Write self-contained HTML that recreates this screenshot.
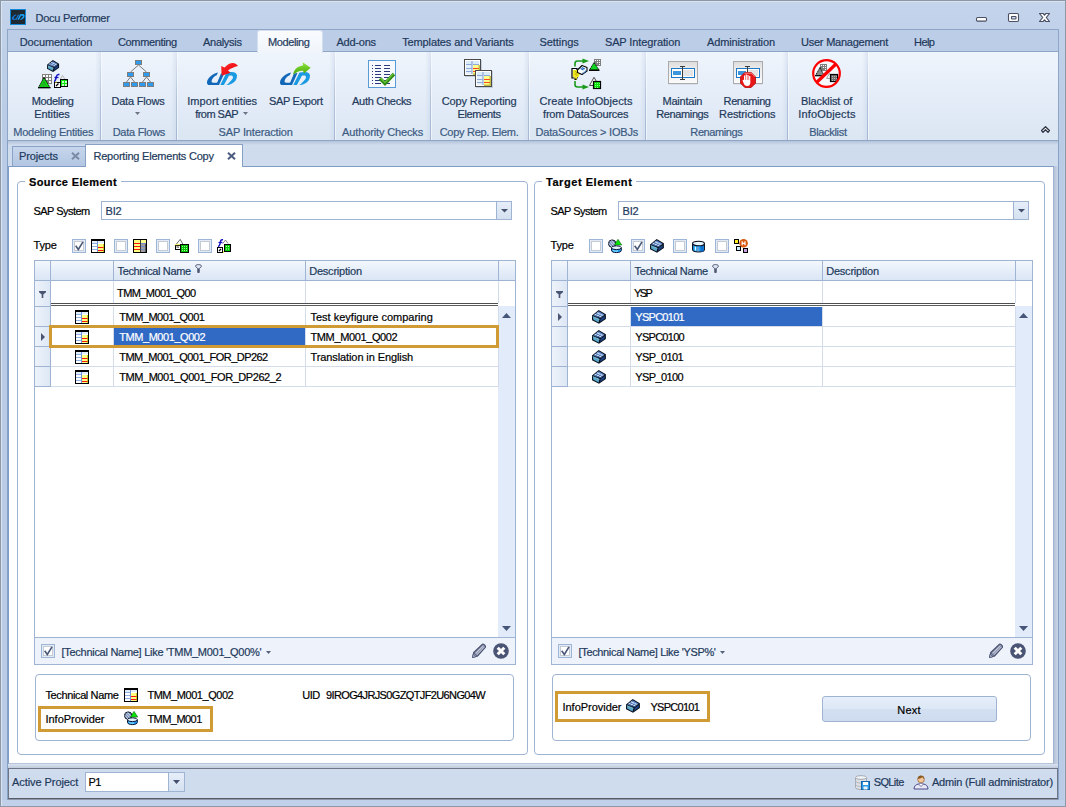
<!DOCTYPE html><html><head><meta charset="utf-8"><title>Docu Performer</title><style>
*{box-sizing:border-box;margin:0;padding:0}
html,body{width:1066px;height:807px;overflow:hidden}
body{font:11px "Liberation Sans",sans-serif;color:#1e395b;background:#c2d3ea;position:relative}
.a{position:absolute}
.t{position:absolute;white-space:nowrap;line-height:13px;height:13px;z-index:3;-webkit-text-stroke:.2px currentColor}
.c{text-align:center}
.k{color:#000}
svg{position:absolute;overflow:visible;z-index:3}
.cb{position:absolute;width:14px;height:14px;border:1px solid #9db5d6;background:#fff;box-shadow:inset 0 0 0 1px #e2eaf6,inset 0 0 0 2px #c6cad2}
.hdr{position:absolute;background:linear-gradient(#f4f8fd,#e3ecf8 60%,#dbe6f5);border-right:1px solid #9fb4d3;border-bottom:1px solid #9fb4d3}
.ind{position:absolute;background:linear-gradient(90deg,#eef3fa,#dde7f5);border-right:1px solid #9fb4d3;border-bottom:1px solid #9fb4d3}
.cell{position:absolute;border-right:1px solid #d3dcea;border-bottom:1px solid #d3dcea;background:#fff}
.combo{position:absolute;border:1px solid #9fb4d3;background:#fff}
.cbtn{position:absolute;background:linear-gradient(#e6eef9,#d5e1f1);border:1px solid #9fb4d3}
.gold{position:absolute;border:3px solid #d09b35}
</style></head><body>
<div class="a" style="left:0px;top:0px;width:1066px;height:807px;border:1px solid #8d97a6;background:linear-gradient(#c4d4eb,#c0d1e9 30px,#c0d1e9);box-shadow:inset 1px 1px 0 #d9e4f2"></div>
<div class="a" style="left:2px;top:30px;width:5px;height:770px;background:linear-gradient(#c0d1e9,#b9cbe5 110px)"></div>
<div class="a" style="left:1059px;top:30px;width:5px;height:770px;background:linear-gradient(#c0d1e9,#b9cbe5 110px)"></div>
<div class="a" style="left:7px;top:29px;width:1px;height:771px;background:#86a0c6"></div>
<div class="a" style="left:1058px;top:29px;width:1px;height:771px;background:#86a0c6"></div>
<div class="a" style="left:7px;top:799px;width:1052px;height:1px;background:#8fa5c6"></div>
<svg class="a" style="left:10px;top:9px" width="16" height="16" viewBox="0 0 16 16"><rect width="16" height="16" fill="#1088dc"/><rect x="1" y="1" width="14" height="14" fill="#1f2932"/><g transform="translate(1.700,5.100) scale(.43)"><path d="M11 .5C6 1.500 .8 5.500 0 9.900-.3 12 .8 13 2.500 13H12L17.500 1 14 1.500 10.200 10.500C9.500 10.800 9 10.800 8.300 10.800H6.500C4.800 10.800 4.300 10 4.700 8.600 5.500 6 7.500 4 9.700 3.200z" fill="#1478d8"/><path d="M19.500 .5 24.500 0C28 0 30 1.500 30 3.600 30 5 29.600 6.500 29 7.700 28 9.500 26.500 10.800 24.500 11.700 23 12.500 21.500 13 19.100 13 20.500 12.300 21.500 11.500 22.300 10.400 24 8.500 25.500 7 25.900 5.900 26.200 4.500 25.500 3.800 24.500 3.600 23.500 3.500 22.500 3.600 21.800 4L16.900 13H13.300z" fill="#18a0f4"/></g></svg>
<div class="t" style="left:35.5px;top:12px;letter-spacing:-.25px;">Docu Performer</div>
<svg class="a" style="left:975px;top:12px" width="78" height="12" viewBox="0 0 78 12"><g fill="#fff" stroke="#4b4f63" stroke-width="1.1"><rect x="1.500" y="5.500" width="10" height="3.600" rx="1.200"/><rect x="33.500" y="1.500" width="10" height="8" rx="1.200"/><rect x="36.500" y="4.500" width="4.500" height="2.500" rx=".4" fill="#c9d7ec"/><path d="M64.500 1.500h3.600l1.400 1.700 1.400-1.700h3.600l-3.200 4 3.200 4h-3.600l-1.400-1.700-1.400 1.700h-3.600l3.200-4z" stroke-linejoin="round" stroke-width="1.200"/></g></svg>
<div class="a" style="left:7px;top:29px;width:1052px;height:23px;background:#bccde7;border:1px solid #8fa5c6;border-bottom:1px solid #8fa5c6"></div>
<div class="a" style="left:7px;top:52px;width:1052px;height:89px;background:linear-gradient(#eff5fc,#e6eef9 40%,#dbe6f3);border-left:1px solid #8fa5c6;border-right:1px solid #8fa5c6;border-bottom:1px solid #8fa5c6"></div>
<div class="a" style="left:257px;top:30px;width:66px;height:23px;background:linear-gradient(#f9fbfe,#f0f5fb);border:1px solid #d3deee;border-bottom:none;border-radius:3px 3px 0 0"></div>
<div class="t" style="left:19.8px;top:36px;letter-spacing:-.12px;">Documentation</div>
<div class="t" style="left:118.0px;top:36px;letter-spacing:-.36px;">Commenting</div>
<div class="t" style="left:203.1px;top:36px;letter-spacing:-.31px;">Analysis</div>
<div class="t" style="left:268.0px;top:36px;letter-spacing:-.39px;">Modeling</div>
<div class="t" style="left:336.4px;top:36px;letter-spacing:-.21px;">Add-ons</div>
<div class="t" style="left:402.2px;top:36px;letter-spacing:-.12px;">Templates and Variants</div>
<div class="t" style="left:539.5px;top:36px;letter-spacing:-.06px;">Settings</div>
<div class="t" style="left:604.9px;top:36px;letter-spacing:-.10px;">SAP Integration</div>
<div class="t" style="left:707.0px;top:36px;letter-spacing:-.13px;">Administration</div>
<div class="t" style="left:801.0px;top:36px;letter-spacing:-.23px;">User Management</div>
<div class="t" style="left:914.1px;top:36px;letter-spacing:-.63px;">Help</div>
<div class="a" style="left:95px;top:52px;width:5px;height:88px;background:linear-gradient(90deg,rgba(190,205,228,0),rgba(190,205,228,.35))"></div>
<div class="a" style="left:100px;top:52px;width:1px;height:88px;background:linear-gradient(#dfe8f4,#b4c5dd 50%,#a3b7d3)"></div>
<div class="a" style="left:101px;top:52px;width:1px;height:88px;background:linear-gradient(#f6f9fd,#eef3fa)"></div>
<div class="a" style="left:171px;top:52px;width:5px;height:88px;background:linear-gradient(90deg,rgba(190,205,228,0),rgba(190,205,228,.35))"></div>
<div class="a" style="left:176px;top:52px;width:1px;height:88px;background:linear-gradient(#dfe8f4,#b4c5dd 50%,#a3b7d3)"></div>
<div class="a" style="left:177px;top:52px;width:1px;height:88px;background:linear-gradient(#f6f9fd,#eef3fa)"></div>
<div class="a" style="left:329px;top:52px;width:5px;height:88px;background:linear-gradient(90deg,rgba(190,205,228,0),rgba(190,205,228,.35))"></div>
<div class="a" style="left:334px;top:52px;width:1px;height:88px;background:linear-gradient(#dfe8f4,#b4c5dd 50%,#a3b7d3)"></div>
<div class="a" style="left:335px;top:52px;width:1px;height:88px;background:linear-gradient(#f6f9fd,#eef3fa)"></div>
<div class="a" style="left:425px;top:52px;width:5px;height:88px;background:linear-gradient(90deg,rgba(190,205,228,0),rgba(190,205,228,.35))"></div>
<div class="a" style="left:430px;top:52px;width:1px;height:88px;background:linear-gradient(#dfe8f4,#b4c5dd 50%,#a3b7d3)"></div>
<div class="a" style="left:431px;top:52px;width:1px;height:88px;background:linear-gradient(#f6f9fd,#eef3fa)"></div>
<div class="a" style="left:523px;top:52px;width:5px;height:88px;background:linear-gradient(90deg,rgba(190,205,228,0),rgba(190,205,228,.35))"></div>
<div class="a" style="left:528px;top:52px;width:1px;height:88px;background:linear-gradient(#dfe8f4,#b4c5dd 50%,#a3b7d3)"></div>
<div class="a" style="left:529px;top:52px;width:1px;height:88px;background:linear-gradient(#f6f9fd,#eef3fa)"></div>
<div class="a" style="left:640px;top:52px;width:5px;height:88px;background:linear-gradient(90deg,rgba(190,205,228,0),rgba(190,205,228,.35))"></div>
<div class="a" style="left:645px;top:52px;width:1px;height:88px;background:linear-gradient(#dfe8f4,#b4c5dd 50%,#a3b7d3)"></div>
<div class="a" style="left:646px;top:52px;width:1px;height:88px;background:linear-gradient(#f6f9fd,#eef3fa)"></div>
<div class="a" style="left:782px;top:52px;width:5px;height:88px;background:linear-gradient(90deg,rgba(190,205,228,0),rgba(190,205,228,.35))"></div>
<div class="a" style="left:787px;top:52px;width:1px;height:88px;background:linear-gradient(#dfe8f4,#b4c5dd 50%,#a3b7d3)"></div>
<div class="a" style="left:788px;top:52px;width:1px;height:88px;background:linear-gradient(#f6f9fd,#eef3fa)"></div>
<div class="a" style="left:862px;top:52px;width:5px;height:88px;background:linear-gradient(90deg,rgba(190,205,228,0),rgba(190,205,228,.35))"></div>
<div class="a" style="left:867px;top:52px;width:1px;height:88px;background:linear-gradient(#dfe8f4,#b4c5dd 50%,#a3b7d3)"></div>
<div class="a" style="left:868px;top:52px;width:1px;height:88px;background:linear-gradient(#f6f9fd,#eef3fa)"></div>
<div class="t c" style="left:-26.799999999999997px;width:160px;top:126px;letter-spacing:-.22px;color:#3b5a82">Modeling Entities</div>
<div class="t c" style="left:58.900000000000006px;width:160px;top:126px;letter-spacing:-.26px;color:#3b5a82">Data Flows</div>
<div class="t c" style="left:175.7px;width:160px;top:126px;letter-spacing:-.13px;color:#3b5a82">SAP Interaction</div>
<div class="t c" style="left:302.6px;width:160px;top:126px;letter-spacing:-.13px;color:#3b5a82">Authority Checks</div>
<div class="t c" style="left:399.1px;width:160px;top:126px;letter-spacing:-.29px;color:#3b5a82">Copy Rep. Elem.</div>
<div class="t c" style="left:506.79999999999995px;width:160px;top:126px;letter-spacing:-.18px;color:#3b5a82">DataSources &gt; IOBJs</div>
<div class="t c" style="left:636.4px;width:160px;top:126px;letter-spacing:-.40px;color:#3b5a82">Renamings</div>
<div class="t c" style="left:747.9px;width:160px;top:126px;letter-spacing:-.32px;color:#3b5a82">Blacklist</div>
<div class="t c" style="left:-27.4px;width:160px;top:95px;letter-spacing:-.36px;">Modeling</div>
<div class="t c" style="left:-28.0px;width:160px;top:108px;letter-spacing:-.07px;">Entities</div>
<div class="t c" style="left:58.0px;width:160px;top:95px;letter-spacing:-.18px;">Data Flows</div>
<div class="t c" style="left:142.2px;width:160px;top:95px;letter-spacing:.05px;">Import entities</div>
<div class="t c" style="left:136.6px;width:160px;top:108px;letter-spacing:-.53px;">from SAP</div>
<div class="t c" style="left:215.8px;width:160px;top:95px;letter-spacing:-.29px;">SAP Export</div>
<div class="t c" style="left:301.7px;width:160px;top:95px;letter-spacing:-.28px;">Auth Checks</div>
<div class="t c" style="left:399.1px;width:160px;top:95px;letter-spacing:-.12px;">Copy Reporting</div>
<div class="t c" style="left:399.1px;width:160px;top:108px;letter-spacing:-.31px;">Elements</div>
<div class="t c" style="left:506.0px;width:160px;top:95px;letter-spacing:.07px;">Create InfoObjects</div>
<div class="t c" style="left:505.70000000000005px;width:160px;top:108px;letter-spacing:-.21px;">from DataSources</div>
<div class="t c" style="left:602.4px;width:160px;top:95px;letter-spacing:-.23px;">Maintain</div>
<div class="t c" style="left:602.4px;width:160px;top:108px;letter-spacing:-.39px;">Renamings</div>
<div class="t c" style="left:667.1px;width:160px;top:95px;letter-spacing:-.39px;">Renaming</div>
<div class="t c" style="left:667.2px;width:160px;top:108px;letter-spacing:-.10px;">Restrictions</div>
<div class="t c" style="left:746.6px;width:160px;top:95px;letter-spacing:-.11px;">Blacklist of</div>
<div class="t c" style="left:746.9px;width:160px;top:108px;letter-spacing:.16px;">InfoObjects</div>
<svg class="a" style="left:135px;top:112px" width="5" height="3" viewBox="0 0 5 3"><path d="M0 0h5L2.5 3z" fill="#6b7385"/></svg>
<svg class="a" style="left:243px;top:112px" width="5" height="3" viewBox="0 0 5 3"><path d="M0 0h5L2.5 3z" fill="#6b7385"/></svg>
<svg class="a" style="left:1041px;top:126px" width="9" height="7" viewBox="0 0 9 7"><path d="M4.500 .7 8.400 4.500 7 6.300 4.500 3.800 2 6.300 .6 4.500z" fill="#fff" stroke="#2f3345" stroke-width="1.300" stroke-linejoin="round"/></svg>
<svg class="a" style="left:36px;top:58px" width="32" height="32" viewBox="0 0 32 32" ><g transform="translate(11,2) scale(.87)"><path d="M0 5.400 6.700 0 13.900 4.200V9L7 13.800 0 10.200z" fill="#0a1220"/><path d="M1.300 5.600 6.800 1.300 12.500 4.500 8 7.700z" fill="#5580c4"/><path d="M1.100 6.700 7.300 9.300 6.600 12.400 1.100 9.600z" fill="#58a6c8"/><path d="M8.700 9.100 12.800 6V8.400L8 12.100z" fill="#1d4282"/><path d="M2.800 4.300 9.500 7M4.800 2.700 11.300 5.700" stroke="#d4e4f8" stroke-width="1.100" fill="none"/><path d="M3.200 6.200 5.800 4M5.600 7.200 8.600 4.800M8 8 11 5.700" stroke="#3a5c9c" stroke-width=".8" fill="none"/><path d="M.8 6.600 7.400 9.300" stroke="#8fd0e4" stroke-width=".8"/></g><rect x="6" y="16" width="10" height="10" fill="#808080"/><path d="M7 17h2v2H7zM10 17h2v2h-2zM13 17h2v2h-2zM10 20h2v2h-2zM13 20h2v2h-2zM13 23h2v2h-2z" fill="#fff"/><path d="M8 19.500 2.500 29.500h11.500z" fill="#0ce40c" stroke="#000" stroke-width="1" stroke-dasharray="1.500 .7"/><path d="M8 21v8M5 29l3-5 3 5" stroke="#2a9a2a" stroke-width="1" fill="none"/><path d="M2 29.700h12.500" stroke="#000" stroke-width="1.300"/><path d="M23.500 16.500c-2.500-.5-3 1-3.500 3.500s-.6 3.500-2 3.500" fill="none" stroke="#1414c4" stroke-width="1.600"/><path d="M18.500 19.500h4" stroke="#1414c4" stroke-width="1.300"/><path d="M24.500 21l2-3.700 2.200 3.700" fill="none" stroke="#b8b8b8" stroke-width="1"/><rect x="18.500" y="24.500" width="6" height="5" fill="#fff" stroke="#000"/><path d="M20 28l2.500-2.500" stroke="#000" stroke-width="1.200"/><path d="M19 24h2" stroke="#f0e040"/><rect x="24.500" y="21.500" width="7" height="7" fill="#0ce40c" stroke="#000"/><path d="M26 23h2v2h-2zM29 23h2v2h-2zM26 26h2v2h-2zM29 26h2v2h-2z" fill="#c4ffc4"/></svg>
<svg class="a" style="left:122px;top:58px" width="33" height="32" viewBox="0 0 33 32" ><path d="M16.500 7 8.500 14M16.500 7l8 7M8.500 19l-4 5M8.500 19l4 5M24.500 19l-4 5M24.500 19l4 5" stroke="#7a7a7a" stroke-width="1" fill="none"/><g fill="#2e9bef" stroke="#7d7d7d"><rect x="13.500" y="2.500" width="6" height="4"/><rect x="5.500" y="14.500" width="6" height="4"/><rect x="21.500" y="14.500" width="6" height="4"/><rect x="1.500" y="24.500" width="6" height="4"/><rect x="9.500" y="24.500" width="6" height="4"/><rect x="17.500" y="24.500" width="6" height="4"/><rect x="25.500" y="24.500" width="6" height="4"/></g></svg>
<svg class="a" style="left:206px;top:58px" width="32" height="32" viewBox="0 0 32 32" ><defs><linearGradient id="gr" x1="0" y1="0" x2="1" y2="1"><stop offset="0" stop-color="#ff2a2a"/><stop offset=".6" stop-color="#f01018"/><stop offset="1" stop-color="#b80020"/></linearGradient></defs><g transform="translate(1,14)"><path d="M11 .5C6 1.500 .8 5.500 0 9.900-.3 12 .8 13 2.500 13H12L17.500 1 14 1.500 10.200 10.500C9.500 10.800 9 10.800 8.300 10.800H6.500C4.800 10.800 4.300 10 4.700 8.600 5.500 6 7.500 4 9.700 3.200z" fill="#1268b8"/><path d="M19.500 .5 24.500 0C28 0 30 1.500 30 3.600 30 5 29.600 6.500 29 7.700 28 9.500 26.500 10.800 24.500 11.700 23 12.500 21.500 13 19.100 13 20.500 12.300 21.500 11.500 22.300 10.400 24 8.500 25.500 7 25.900 5.900 26.200 4.500 25.500 3.800 24.500 3.600 23.500 3.500 22.500 3.600 21.800 4L16.900 13H13.300z" fill="#1a9ae2"/></g><path d="M15.200 7.900 15.600 17.800 24.600 14.700 22 12.500C24.500 10.500 28 9 32 8 29 3.800 24 3.800 18.600 9.500z" fill="url(#gr)"/></svg>
<svg class="a" style="left:279px;top:58px" width="33" height="32" viewBox="0 0 33 32" ><defs><linearGradient id="gg" x1="0" y1="0" x2="0" y2="1"><stop offset="0" stop-color="#8fe83c"/><stop offset="1" stop-color="#4aa60c"/></linearGradient></defs><g transform="translate(1,14)"><path d="M11 .5C6 1.500 .8 5.500 0 9.900-.3 12 .8 13 2.500 13H12L17.500 1 14 1.500 10.200 10.500C9.500 10.800 9 10.800 8.300 10.800H6.500C4.800 10.800 4.300 10 4.700 8.600 5.500 6 7.500 4 9.700 3.200z" fill="#1268b8"/><path d="M19.500 .5 24.500 0C28 0 30 1.500 30 3.600 30 5 29.600 6.500 29 7.700 28 9.500 26.500 10.800 24.500 11.700 23 12.500 21.500 13 19.100 13 20.500 12.300 21.500 11.500 22.300 10.400 24 8.500 25.500 7 25.900 5.900 26.200 4.500 25.500 3.800 24.500 3.600 23.500 3.500 22.500 3.600 21.800 4L16.900 13H13.300z" fill="#1a9ae2"/></g><path d="M14.200 16.500C14.500 13 17 8.500 24.100 7.200L23.600 4.300 31.700 9.700 25 15.600 24.100 12.700C21 12.300 18 13.500 14.200 16.500z" fill="url(#gg)"/></svg>
<svg class="a" style="left:365px;top:58px" width="32" height="32" viewBox="0 0 32 32" ><rect x="3.500" y="2.500" width="27" height="27" fill="#f6f9fe" stroke="#5b9bd5"/><path d="M7 7.500h1M7 10.500h1M7 13.500h1M7 16.500h1M7 19.500h1M7 22.500h1M7 25.500h1" stroke="#2b3a7c"/><path d="M10 7.500h6M10 10.500h6M10 13.500h6M10 16.500h6M10 19.500h6M10 22.500h6M10 25.500h6M19 7.500h6M19 10.500h6M19 13.500h6M19 16.500h6M19 19.500h6M19 22.500h6M19 25.500h6" stroke="#2b3a7c"/><path d="M15 20.500 20 25.500 29 16" fill="none" stroke="#2f8c14" stroke-width="3.400"/><path d="M15.500 20 20 24.500 28.500 15.700" fill="none" stroke="#6cc83c" stroke-width="1.200"/></svg>
<svg class="a" style="left:463px;top:58px" width="32" height="32" viewBox="0 0 32 32" ><rect x="2" y="2" width="17" height="17" fill="#8090a8" opacity=".35"/><rect x="13" y="13" width="17" height="17" fill="#8090a8" opacity=".35"/><g transform="translate(1,1)"><rect x=".5" y=".5" width="16" height="16" fill="#fff" stroke="#4a4a4a"/><rect x="2" y="2" width="13" height="3" fill="#d9ecf8"/><rect x="2" y="5" width="6" height="10" fill="#e4f1fa"/><path d="M2 5.500h6M2 9.500h6M2 12.500h6" stroke="#8ea8d8"/><path d="M8 2v13" stroke="#9bb0dc" stroke-width="1.400"/><rect x="9" y="6" width="6" height="9" fill="#ffff8c"/><path d="M9 9.500h6M9 12.500h6" stroke="#ff4820" stroke-width="1.200"/><path d="M15.200 6v9.500M9 15.200h6.500" stroke="#a8a000" stroke-width="1"/><path d="M9 5.500h6" stroke="#8ea8d8"/></g><g transform="translate(12,12)"><rect x=".5" y=".5" width="16" height="16" fill="#fff" stroke="#4a4a4a"/><rect x="2" y="2" width="13" height="3" fill="#d9ecf8"/><rect x="2" y="5" width="6" height="10" fill="#e4f1fa"/><path d="M2 5.500h6M2 9.500h6M2 12.500h6" stroke="#8ea8d8"/><path d="M8 2v13" stroke="#9bb0dc" stroke-width="1.400"/><rect x="9" y="6" width="6" height="9" fill="#ffff8c"/><path d="M9 9.500h6M9 12.500h6" stroke="#ff4820" stroke-width="1.200"/><path d="M15.200 6v9.500M9 15.200h6.500" stroke="#a8a000" stroke-width="1"/><path d="M9 5.500h6" stroke="#8ea8d8"/></g></svg>
<svg class="a" style="left:570px;top:58px" width="32" height="32" viewBox="0 0 32 32" ><path d="M5 8.500V5.500c0-1.500 1-2.500 2.500-2.500H13" fill="none" stroke="#1a9a1a" stroke-width="1.600"/><path d="M12.500 .5 19 3 12.500 5.600z" fill="#1a9a1a"/><path d="M5 23v3.500c0 1.500 1 2.500 2.500 2.500H13" fill="none" stroke="#1a9a1a" stroke-width="1.600"/><path d="M12.500 26.400 19 29 12.500 31.500z" fill="#1a9a1a"/><rect x="24" y="1" width="7" height="7" fill="#808080"/><path d="M25 2h1v1h-1zM27 2h1v1h-1zM29 2h1v1h-1zM27 4h1v1h-1zM29 4h1v1h-1zM29 6h1v1h-1z" fill="#fff"/><path d="M24 4.500 19.500 12h9.500z" fill="#10d820" stroke="#000" stroke-width=".9" stroke-dasharray="1.500 .6"/><path d="M19 12.300h10.500" stroke="#000" stroke-width="1.300"/><path d="M19.500 27.500 24 19.300 26.500 23.500" fill="#fff" stroke="#4a4a4a" stroke-width="1"/><path d="M19.500 27.500h4" stroke="#4a4a4a"/><rect x="23.500" y="23.500" width="7" height="7" fill="#0ce40c" stroke="#000" stroke-width="1.200"/><path d="M25 25h1v1h-1zM27 25h1v1h-1zM29 25h1v1h-1zM25 27h1v1h-1zM27 27h1v1h-1zM29 27h1v1h-1zM25 29h1v1h-1zM27 29h1v1h-1z" fill="#7dff7d"/><path d="M2 10.500h5v9.500H2z" fill="#fff" stroke="#000" stroke-width="1.200"/><path d="M3 12h4.500l2.500 3.500-1.500 3.500H7v3H4.500V19H3z" fill="#f0e820"/><path d="M5 13.500c1.500 0 2 1 1 2s0 1.800 1.500 1.500" fill="none" stroke="#a09000" stroke-width=".8"/><path d="M4.500 20.500h2v1.500h-2z" fill="#000"/><path d="M7.500 12 12 7.500 17 9.500V13L12 16.500 7.500 14.500z" fill="#fff" stroke="#000" stroke-width="1.100" stroke-linejoin="round"/><path d="M10.500 10.500 13.500 12M11.800 9.500 14.800 11" stroke="#1060c0" stroke-width="1.100"/><path d="M12.500 15.500 16.500 12.500" stroke="#2a80d8" stroke-width="1.300" stroke-dasharray="1 .7"/></svg>
<svg class="a" style="left:667px;top:58px" width="32" height="32" viewBox="0 0 32 32" ><defs><linearGradient id="rb" x1="0" y1="0" x2="0" y2="1"><stop offset="0" stop-color="#dcdcdc"/><stop offset=".35" stop-color="#ececec"/><stop offset="1" stop-color="#fbfbfb"/></linearGradient></defs><rect x="1.500" y="3.500" width="29" height="23" fill="#000" opacity=".10"/><rect x="1.500" y="3.500" width="29" height="22" fill="url(#rb)" stroke="#ababab"/><rect x="4.500" y="10.500" width="23" height="9" fill="#fff" stroke="#1e7ac8"/><rect x="6" y="13" width="8" height="4" fill="#3c96dc"/><rect x="16" y="12" width="10" height="6" fill="#e4e4e4"/><path d="M15.500 8.500v13M13 8.500h5M13 21.500h5" stroke="#3c3c3c" stroke-width="1"/></svg>
<svg class="a" style="left:732px;top:58px" width="32" height="32" viewBox="0 0 32 32" ><defs><linearGradient id="rb2" x1="0" y1="0" x2="0" y2="1"><stop offset="0" stop-color="#dcdcdc"/><stop offset=".35" stop-color="#ececec"/><stop offset="1" stop-color="#fbfbfb"/></linearGradient></defs><rect x="1.500" y="3.500" width="29" height="23" fill="#000" opacity=".10"/><rect x="1.500" y="3.500" width="29" height="22" fill="url(#rb2)" stroke="#ababab"/><rect x="4.500" y="10.500" width="23" height="9" fill="#fff" stroke="#1e7ac8"/><rect x="6" y="13" width="8" height="4" fill="#3c96dc"/><rect x="16" y="12" width="10" height="6" fill="#e4e4e4"/><path d="M15.500 8.500v13M13 8.500h5M13 21.500h5" stroke="#3c3c3c" stroke-width="1"/><path d="M12.800 14.500h6.400l4.300 4.300v6.400l-4.300 4.300h-6.400l-4.300-4.300v-6.400z" fill="#e81818" stroke="#b00808" stroke-width=".8"/><path d="M12.500 15.200h7l3.500 3.500" fill="none" stroke="#ff8a8a" stroke-width="1"/><path d="M12 22v-4.500h1.200V22h.5v-5.500h1.200V22h.5v-5h1.200v5h.5v-4h1.200v6.500c0 2-1 3.500-3 3.500-2 0-3-1-3.500-2.500L10.500 22.500l1-.8z" fill="#fff"/></svg>
<svg class="a" style="left:810px;top:58px" width="33" height="32" viewBox="0 0 33 32" ><circle cx="16.500" cy="15.500" r="13.500" fill="#f7f9fe" opacity=".9"/><rect x="10" y="6" width="7" height="7" fill="#808080"/><path d="M11 7h1v1h-1zM13 7h1v1h-1zM15 7h1v1h-1zM13 9h1v1h-1zM15 9h1v1h-1zM15 11h1v1h-1z" fill="#fff"/><path d="M10 9.500 5.500 17.500h8.500z" fill="#8a8a8a" stroke="#000" stroke-width=".9" stroke-dasharray="1.500 .6"/><path d="M5 17.700h9.500" stroke="#000" stroke-width="1.200"/><path d="M16.500 20.500 19.500 15.500 21 17.500M16.500 20.500h3.500" fill="#fff" stroke="#9a9a9a" stroke-width=".9"/><rect x="20.500" y="16.500" width="7" height="7" fill="#707070" stroke="#000" stroke-width="1.200"/><path d="M22 18h1v1h-1zM24 18h1v1h-1zM26 18h1v1h-1zM22 20h1v1h-1zM24 20h1v1h-1zM26 20h1v1h-1zM22 22h1v1h-1zM24 22h1v1h-1z" fill="#b8b8b8"/><circle cx="16.500" cy="15.500" r="13.300" fill="none" stroke="#ff0000" stroke-width="2.200"/><path d="M6.500 24.500 26 6" stroke="#ff0000" stroke-width="3.200"/></svg>
<div class="a" style="left:8px;top:141px;width:1050px;height:27px;background:linear-gradient(#b4c3da,#c9d6ea 3px,#cfdcee 4px)"></div>
<div class="a" style="left:12px;top:146px;width:74px;height:20px;background:linear-gradient(#c6d6ec,#b2c6e2);border:1px solid #8aa2c8;border-bottom:none"></div>
<div class="t" style="left:19px;top:150px;letter-spacing:-.12px;">Projects</div>
<div class="a" style="left:85px;top:144px;width:158px;height:23px;background:#fff;border:1px solid #86a0c6;border-bottom:none;z-index:2"></div>
<div class="t" style="left:93.5px;top:150px;letter-spacing:-.22px;">Reporting Elements Copy</div>
<svg class="a" style="left:71px;top:152px" width="9" height="8" viewBox="0 0 9 8"><path d="M1 .800 8 7.200M8 .800 1 7.200" stroke="#7a8aa3" stroke-width="2" fill="none"/></svg>
<svg class="a" style="left:227px;top:152px" width="9" height="8" viewBox="0 0 9 8"><path d="M1 .800 8 7.200M8 .800 1 7.200" stroke="#4d5a80" stroke-width="2" fill="none"/></svg>
<div class="a" style="left:8px;top:166px;width:1046px;height:598px;background:#fff;border:1px solid #7f9bc6;border-right-color:#9fb4d3;border-bottom-color:#b4c4dc"></div>
<div class="a" style="left:8px;top:764px;width:1050px;height:4px;background:linear-gradient(#dbe3ef,#bfcbde)"></div>
<div class="a" style="left:1054px;top:166px;width:4px;height:598px;background:linear-gradient(90deg,#b5c2d8,#c9d5e6)"></div>
<div class="a" style="left:17px;top:181px;width:511px;height:574px;border:1px solid #9fb4d3;border-radius:4px"></div>
<div class="a" style="left:25px;top:179px;width:96px;height:6px;background:#fff"></div>
<div class="t" style="left:29px;top:176px;letter-spacing:.34px;font-weight:bold;color:#000">Source Element</div>
<div class="t" style="left:33.5px;top:205px;letter-spacing:-.53px;color:#000">SAP System</div>
<div class="combo" style="left:101px;top:201px;width:411px;height:19px;"></div>
<div class="t" style="left:105.5px;top:205px;letter-spacing:-.17px;">BI2</div>
<div class="cbtn" style="left:496px;top:202px;width:15px;height:17px;border:none;border-left:1px solid #9fb4d3"></div>
<svg class="a" style="left:501px;top:209px" width="7" height="3.5" viewBox="0 0 7 3.5"><path d="M0 0h7L3.5 3.5z" fill="#44506e"/></svg>
<div class="t" style="left:33.5px;top:239px;letter-spacing:-.14px;color:#000">Type</div>
<div class="cb" style="left:72px;top:239px"></div>
<svg class="a" style="left:75px;top:241px" width="9" height="10" viewBox="0 0 9 10"><path d="M.7 4.800 3.300 8.500 8 .800" fill="none" stroke="#4a5878" stroke-width="1.600"/></svg>
<svg class="a" style="left:91px;top:239px" width="16" height="16" viewBox="0 0 16 16"><rect width="14" height="14" fill="#000"/><rect x="1" y="2" width="12" height="11" fill="#fff"/><rect x="1" y="2" width="12" height="2" fill="#e2edfa"/><path d="M1 4.500h5M1 7.500h5M1 10.500h5" stroke="#8fb0e4"/><path d="M6.500 2v11" stroke="#6f94d8"/><rect x="7" y="5" width="6" height="8" fill="#ffff80"/><path d="M7 8.500h6M7 11.500h6" stroke="#ff1010" stroke-width="1.200"/><path d="M12.500 5v8" stroke="#b8b000" opacity=".7"/></svg>
<div class="cb" style="left:114px;top:239px"></div>
<svg class="a" style="left:133px;top:239px" width="16" height="16" viewBox="0 0 16 16"><rect width="14" height="14" fill="#000"/><rect x="1" y="1" width="6" height="12" fill="#ffff80"/><path d="M1 4.500h6M1 7.500h6M1 10.500h6" stroke="#ff1010" stroke-width="1.200"/><rect x="7" y="1" width="6" height="3" fill="#ffff90"/><rect x="7" y="4" width="6" height="9" fill="#a0a0a0"/><path d="M7 4.500h6M7 7.500h6M7 10.500h6" stroke="#6f8fd0"/><path d="M7.500 1v12" stroke="#3a3a3a"/><path d="M12.500 5v8" stroke="#555"/></svg>
<div class="cb" style="left:156px;top:239px"></div>
<svg class="a" style="left:175px;top:239px" width="16" height="16" viewBox="0 0 16 16"><path d="M1.400 5 5.200 .4 7.800 5" fill="none" stroke="#4a4a4a" stroke-width=".8"/><rect x=".5" y="6.500" width="5" height="4" fill="#fff" stroke="#000"/><path d="M0 5.700h5" stroke="#f4ec50"/><path d="M1.500 8c.7-.8 1.300.8 2.500 0" stroke="#000" fill="none" stroke-width=".9"/><rect x="5.500" y="5.500" width="8" height="8" fill="#00c000" stroke="#000"/><path d="M7 7h1v1H7zM9 7h1v1H9zM11 7h1v1h-1zM7 9h1v1H7zM9 9h1v1H9zM11 9h1v1h-1zM7 11h1v1H7zM9 11h1v1H9zM11 11h1v1h-1z" fill="#9dff9d"/></svg>
<div class="cb" style="left:198px;top:239px"></div>
<svg class="a" style="left:217px;top:239px" width="16" height="16" viewBox="0 0 16 16"><path d="M5.800 4.500 8.500 1 11 4.500" fill="none" stroke="#6a6a6a" stroke-width=".8"/><path d="M6 .8C4 .3 3.600 1.500 3.200 4S2.500 7.500 1 7.500" fill="none" stroke="#1414c4" stroke-width="1.500"/><path d="M1.500 3.500h4" stroke="#1414c4" stroke-width="1.200"/><rect x=".5" y="8.500" width="5" height="5" fill="#fff" stroke="#000"/><path d="M2 12l2-2" stroke="#000" stroke-width="1.200"/><path d="M6.500 14v-2" stroke="#f4ec50"/><rect x="7.500" y="5.500" width="6" height="7" fill="#00d000" stroke="#000"/><path d="M9 7h1v1H9zM11 7h1v1h-1zM9 9.500h1v1H9zM11 9.500h1v1h-1z" fill="#c8ffc8"/></svg>
<div class="a" style="left:34px;top:260px;width:482px;height:378px;border:1px solid #9fb4d3;background:#fff"></div>
<div class="hdr" style="left:35px;top:261px;width:16px;height:20px;"></div>
<div class="hdr" style="left:51px;top:261px;width:63px;height:20px;"></div>
<div class="hdr" style="left:114px;top:261px;width:192px;height:20px;"></div>
<div class="hdr" style="left:306px;top:261px;width:193px;height:20px;"></div>
<div class="hdr" style="left:499px;top:261px;width:16px;height:20px;border-right:none"></div>
<div class="t" style="left:117.5px;top:265px;letter-spacing:-.36px;">Technical Name</div>
<svg class="a" style="left:195px;top:264px" width="7" height="9" viewBox="0 0 7 9"><path d="M3.500 .6C5.200 .6 6.400 1.200 6.400 2c0 .9-1.200 1.800-2.200 2.600V8.500H2.800V4.600C1.800 3.800 .6 2.900 .6 2 .6 1.200 1.800 .6 3.500 .6z" fill="#dfe6f2" stroke="#4a5670" stroke-width="1"/><path d="M3.500 4.500v4" stroke="#4a5670" stroke-width="1.400"/></svg>
<div class="t" style="left:309.2px;top:265px;letter-spacing:-.21px;">Description</div>
<div class="ind" style="left:35px;top:281px;width:16px;height:26px;"></div>
<svg class="a" style="left:39px;top:291px" width="7" height="7" viewBox="0 0 7 7"><path d="M0 0h7v1.300L4.300 3.500V7H2.700V3.500L0 1.300z" fill="#4a5573"/></svg>
<div class="cell" style="left:51px;top:281px;width:63px;height:22px;border-bottom:none"></div>
<div class="cell" style="left:114px;top:281px;width:192px;height:22px;border-bottom:none"></div>
<div class="cell" style="left:306px;top:281px;width:193px;height:22px;border-bottom:none"></div>
<div class="t" style="left:117px;top:287px;letter-spacing:-.59px;color:#000">TMM_M001_Q00</div>
<div class="a" style="left:51px;top:303px;width:447px;height:1px;background:#4f4f4f"></div>
<div class="a" style="left:51px;top:305px;width:447px;height:1px;background:#5c5c5c"></div>
<div class="a" style="left:498px;top:306px;width:17px;height:331px;background:#e1ebf9"></div>
<svg class="a" style="left:502px;top:313px" width="9" height="5" viewBox="0 0 9 5"><path d="M0 5 4.500 0 9 5z" fill="#47557a"/></svg>
<svg class="a" style="left:502px;top:626px" width="9" height="5" viewBox="0 0 9 5"><path d="M0 0h9L4.500 5z" fill="#47557a"/></svg>
<div class="ind" style="left:35px;top:307px;width:16px;height:20px;"></div>
<div class="cell" style="left:51px;top:307px;width:63px;height:20px;"></div>
<div class="cell" style="left:114px;top:307px;width:192px;height:20px;"></div>
<div class="cell" style="left:306px;top:307px;width:193px;height:20px;"></div>
<svg class="a" style="left:75px;top:310px" width="16" height="16" viewBox="0 0 16 16"><rect width="14" height="14" fill="#000"/><rect x="1" y="2" width="12" height="11" fill="#fff"/><rect x="1" y="2" width="12" height="2" fill="#e2edfa"/><path d="M1 4.500h5M1 7.500h5M1 10.500h5" stroke="#8fb0e4"/><path d="M6.500 2v11" stroke="#6f94d8"/><rect x="7" y="5" width="6" height="8" fill="#ffff80"/><path d="M7 8.500h6M7 11.500h6" stroke="#ff1010" stroke-width="1.200"/><path d="M12.500 5v8" stroke="#b8b000" opacity=".7"/></svg>
<div class="t" style="left:119.3px;top:311px;letter-spacing:-.51px;color:#000;">TMM_M001_Q001</div>
<div class="t" style="left:310.5px;top:311px;letter-spacing:0px;color:#000">Test keyfigure comparing</div>
<div class="ind" style="left:35px;top:327px;width:16px;height:20px;"></div>
<div class="cell" style="left:51px;top:327px;width:63px;height:20px;"></div>
<div class="cell" style="left:114px;top:327px;width:192px;height:20px;"></div>
<div class="cell" style="left:306px;top:327px;width:193px;height:20px;"></div>
<svg class="a" style="left:75px;top:330px" width="16" height="16" viewBox="0 0 16 16"><rect width="14" height="14" fill="#000"/><rect x="1" y="2" width="12" height="11" fill="#fff"/><rect x="1" y="2" width="12" height="2" fill="#e2edfa"/><path d="M1 4.500h5M1 7.500h5M1 10.500h5" stroke="#8fb0e4"/><path d="M6.500 2v11" stroke="#6f94d8"/><rect x="7" y="5" width="6" height="8" fill="#ffff80"/><path d="M7 8.500h6M7 11.500h6" stroke="#ff1010" stroke-width="1.200"/><path d="M12.500 5v8" stroke="#b8b000" opacity=".7"/></svg>
<div class="a" style="left:114px;top:328px;width:191px;height:17px;background:#316ac5"></div>
<svg class="a" style="left:41px;top:333px" width="4" height="8" viewBox="0 0 4 8"><path d="M0 0 4 4 0 8z" fill="#4a5573"/></svg>
<div class="t" style="left:119.3px;top:331px;letter-spacing:-.45px;color:#fff;">TMM_M001_Q002</div>
<div class="t" style="left:310.5px;top:331px;letter-spacing:-.38px;color:#000">TMM_M001_Q002</div>
<div class="ind" style="left:35px;top:347px;width:16px;height:20px;"></div>
<div class="cell" style="left:51px;top:347px;width:63px;height:20px;"></div>
<div class="cell" style="left:114px;top:347px;width:192px;height:20px;"></div>
<div class="cell" style="left:306px;top:347px;width:193px;height:20px;"></div>
<svg class="a" style="left:75px;top:350px" width="16" height="16" viewBox="0 0 16 16"><rect width="14" height="14" fill="#000"/><rect x="1" y="2" width="12" height="11" fill="#fff"/><rect x="1" y="2" width="12" height="2" fill="#e2edfa"/><path d="M1 4.500h5M1 7.500h5M1 10.500h5" stroke="#8fb0e4"/><path d="M6.500 2v11" stroke="#6f94d8"/><rect x="7" y="5" width="6" height="8" fill="#ffff80"/><path d="M7 8.500h6M7 11.500h6" stroke="#ff1010" stroke-width="1.200"/><path d="M12.500 5v8" stroke="#b8b000" opacity=".7"/></svg>
<div class="t" style="left:119.3px;top:351px;letter-spacing:-.54px;color:#000;">TMM_M001_Q001_FOR_DP262</div>
<div class="t" style="left:310.5px;top:351px;letter-spacing:-.10px;color:#000">Translation in English</div>
<div class="ind" style="left:35px;top:367px;width:16px;height:20px;"></div>
<div class="cell" style="left:51px;top:367px;width:63px;height:20px;"></div>
<div class="cell" style="left:114px;top:367px;width:192px;height:20px;"></div>
<div class="cell" style="left:306px;top:367px;width:193px;height:20px;"></div>
<svg class="a" style="left:75px;top:370px" width="16" height="16" viewBox="0 0 16 16"><rect width="14" height="14" fill="#000"/><rect x="1" y="2" width="12" height="11" fill="#fff"/><rect x="1" y="2" width="12" height="2" fill="#e2edfa"/><path d="M1 4.500h5M1 7.500h5M1 10.500h5" stroke="#8fb0e4"/><path d="M6.500 2v11" stroke="#6f94d8"/><rect x="7" y="5" width="6" height="8" fill="#ffff80"/><path d="M7 8.500h6M7 11.500h6" stroke="#ff1010" stroke-width="1.200"/><path d="M12.500 5v8" stroke="#b8b000" opacity=".7"/></svg>
<div class="t" style="left:119.3px;top:371px;letter-spacing:-.45px;color:#000;">TMM_M001_Q001_FOR_DP262_2</div>
<div class="gold" style="left:49px;top:325px;width:450px;height:23px;"></div>
<div class="a" style="left:34px;top:637px;width:482px;height:28px;border:1px solid #9fb4d3;background:#eef3fb"></div>
<div class="cb" style="left:41px;top:644px"></div>
<svg class="a" style="left:44px;top:646px" width="9" height="10" viewBox="0 0 9 10"><path d="M.7 4.800 3.300 8.500 8 .800" fill="none" stroke="#4a5878" stroke-width="1.600"/></svg>
<div class="t" style="left:61.5px;top:646px;letter-spacing:-.28px;">[Technical Name] Like 'TMM_M001_Q00%'</div>
<svg class="a" style="left:266px;top:651px" width="5" height="3" viewBox="0 0 5 3"><path d="M0 0h5L2.5 3z" fill="#55607a"/></svg>
<svg class="a" style="left:471px;top:643px" width="16" height="16" viewBox="0 0 16 16"><path d="M11.500 1.300c1-.6 3.300 1.500 3 2.700L6.500 13 1.600 14.400 2.800 9.500z" fill="#9299b2" stroke="#4a5373" stroke-width="1.200" stroke-linejoin="round"/><path d="M2.800 9.500 6.500 13" stroke="#4a5373"/><path d="M2.300 11.200 1.600 14.400 4.800 13.600z" fill="#eef1f7" stroke="#4a5373" stroke-width=".9"/><path d="M4.500 10.500 12.300 2.800M5.800 11.800 13.500 4" stroke="#d9dde8" stroke-width=".8"/></svg>
<svg class="a" style="left:493px;top:643px" width="16" height="16" viewBox="0 0 16 16"><circle cx="8" cy="8" r="7.800" fill="#4a5475"/><path d="M4.700 4.700 11.300 11.300M11.300 4.700 4.700 11.300" stroke="#fff" stroke-width="3"/></svg>
<div class="a" style="left:35px;top:674px;width:479px;height:67px;border:1px solid #9fb4d3;border-radius:4px"></div>
<div class="a" style="left:534px;top:181px;width:511px;height:574px;border:1px solid #9fb4d3;border-radius:4px"></div>
<div class="a" style="left:542px;top:179px;width:94px;height:6px;background:#fff"></div>
<div class="t" style="left:546px;top:176px;letter-spacing:.55px;font-weight:bold;color:#000">Target Element</div>
<div class="t" style="left:550.5px;top:205px;letter-spacing:-.53px;color:#000">SAP System</div>
<div class="combo" style="left:618px;top:201px;width:411px;height:19px;"></div>
<div class="t" style="left:622.5px;top:205px;letter-spacing:-.17px;">BI2</div>
<div class="cbtn" style="left:1013px;top:202px;width:15px;height:17px;border:none;border-left:1px solid #9fb4d3"></div>
<svg class="a" style="left:1018px;top:209px" width="7" height="3.5" viewBox="0 0 7 3.5"><path d="M0 0h7L3.5 3.5z" fill="#44506e"/></svg>
<div class="t" style="left:550.5px;top:239px;letter-spacing:-.14px;color:#000">Type</div>
<div class="cb" style="left:589px;top:239px"></div>
<svg class="a" style="left:608px;top:239px" width="16" height="16" viewBox="0 0 16 16"><circle cx="4.200" cy="4.600" r="3.700" fill="#7a90b8" stroke="#0c1424" stroke-width="1"/><path d="M2 2.500 6 7M3.500 1.500 7.300 5.800M1 4.500 4 8" stroke="#e6edf8" stroke-width=".8"/><path d="M10 .3 13.800 6.100H6.400z" fill="#08e408" stroke="#0a4a0a" stroke-width=".5"/><path d="M3.500 8.800v2.600c0 1.300 2.200 2.200 4.900 2.200s4.900-.9 4.900-2.200V8.800" fill="#1e9af8" stroke="#081430" stroke-width="1"/><ellipse cx="8.400" cy="8.700" rx="4.900" ry="1.900" fill="#e2f3ff" stroke="#081430" stroke-width="1"/><path d="M5 11.300c1 .9 3 1.200 5 .6" stroke="#8fe0ff" stroke-width="1.100" fill="none"/></svg>
<div class="cb" style="left:631px;top:239px"></div>
<svg class="a" style="left:634px;top:241px" width="9" height="10" viewBox="0 0 9 10"><path d="M.7 4.800 3.300 8.500 8 .800" fill="none" stroke="#4a5878" stroke-width="1.600"/></svg>
<svg class="a" style="left:650px;top:239px" width="16" height="16" viewBox="0 0 16 16"><path d="M0 5.400 6.700 0 13.900 4.200V9L7 13.800 0 10.200z" fill="#0a1220"/><path d="M1.300 5.600 6.800 1.300 12.500 4.500 8 7.700z" fill="#5580c4"/><path d="M1.100 6.700 7.300 9.300 6.600 12.400 1.100 9.600z" fill="#58a6c8"/><path d="M8.700 9.100 12.800 6V8.400L8 12.100z" fill="#1d4282"/><path d="M2.800 4.300 9.500 7M4.800 2.700 11.300 5.700" stroke="#d4e4f8" stroke-width="1.100" fill="none"/><path d="M3.200 6.200 5.800 4M5.600 7.200 8.600 4.800M8 8 11 5.700" stroke="#3a5c9c" stroke-width=".8" fill="none"/><path d="M.8 6.600 7.400 9.300" stroke="#8fd0e4" stroke-width=".8"/></svg>
<div class="cb" style="left:673px;top:239px"></div>
<svg class="a" style="left:692px;top:239px" width="16" height="16" viewBox="0 0 16 16"><path d="M.6 4.600v6c0 1.500 2.700 2.400 5.900 2.400s5.900-.9 5.900-2.400v-6" fill="#1ea4f6" stroke="#0a0f1e" stroke-width="1.100"/><path d="M8.500 7v5.500h3V7z" fill="#0f6fd0"/><path d="M3.500 7.500v4" stroke="#e8f8ff" stroke-width="1.200"/><path d="M6 8v4.500" stroke="#9a9ab8" stroke-width="1.200"/><ellipse cx="6.500" cy="4.500" rx="5.900" ry="2.300" fill="#e8f6ff" stroke="#0a0f1e" stroke-width="1.100"/></svg>
<div class="cb" style="left:715px;top:239px"></div>
<svg class="a" style="left:734px;top:239px" width="16" height="16" viewBox="0 0 16 16"><rect x=".5" y=".5" width="4" height="4" fill="#ffee20" stroke="#000"/><rect x="2.500" y="7.500" width="4" height="4" fill="#c8ecff" stroke="#000"/><rect x="9.500" y="9.500" width="4" height="4" fill="#c8a0e0" stroke="#000"/><circle cx="9.600" cy="4.300" r="4.300" fill="#d85a10"/><path d="M8.200 2.300v4M11 2.300v4M8.200 4.300H11" stroke="#fff" stroke-width="1.200"/></svg>
<div class="a" style="left:551px;top:260px;width:482px;height:378px;border:1px solid #9fb4d3;background:#fff"></div>
<div class="hdr" style="left:552px;top:261px;width:16px;height:20px;"></div>
<div class="hdr" style="left:568px;top:261px;width:63px;height:20px;"></div>
<div class="hdr" style="left:631px;top:261px;width:192px;height:20px;"></div>
<div class="hdr" style="left:823px;top:261px;width:193px;height:20px;"></div>
<div class="hdr" style="left:1016px;top:261px;width:16px;height:20px;border-right:none"></div>
<div class="t" style="left:634.5px;top:265px;letter-spacing:-.36px;">Technical Name</div>
<svg class="a" style="left:712px;top:264px" width="7" height="9" viewBox="0 0 7 9"><path d="M3.500 .6C5.200 .6 6.400 1.200 6.400 2c0 .9-1.200 1.800-2.200 2.600V8.500H2.800V4.600C1.800 3.800 .6 2.900 .6 2 .6 1.200 1.800 .6 3.500 .6z" fill="#dfe6f2" stroke="#4a5670" stroke-width="1"/><path d="M3.500 4.500v4" stroke="#4a5670" stroke-width="1.400"/></svg>
<div class="t" style="left:826.2px;top:265px;letter-spacing:-.21px;">Description</div>
<div class="ind" style="left:552px;top:281px;width:16px;height:26px;"></div>
<svg class="a" style="left:556px;top:291px" width="7" height="7" viewBox="0 0 7 7"><path d="M0 0h7v1.300L4.300 3.500V7H2.700V3.500L0 1.300z" fill="#4a5573"/></svg>
<div class="cell" style="left:568px;top:281px;width:63px;height:22px;border-bottom:none"></div>
<div class="cell" style="left:631px;top:281px;width:192px;height:22px;border-bottom:none"></div>
<div class="cell" style="left:823px;top:281px;width:193px;height:22px;border-bottom:none"></div>
<div class="t" style="left:634px;top:287px;letter-spacing:-1.64px;color:#000">YSP</div>
<div class="a" style="left:568px;top:303px;width:447px;height:1px;background:#4f4f4f"></div>
<div class="a" style="left:568px;top:305px;width:447px;height:1px;background:#5c5c5c"></div>
<div class="a" style="left:1015px;top:306px;width:17px;height:331px;background:#e1ebf9"></div>
<svg class="a" style="left:1019px;top:313px" width="9" height="5" viewBox="0 0 9 5"><path d="M0 5 4.500 0 9 5z" fill="#47557a"/></svg>
<svg class="a" style="left:1019px;top:626px" width="9" height="5" viewBox="0 0 9 5"><path d="M0 0h9L4.500 5z" fill="#47557a"/></svg>
<div class="ind" style="left:552px;top:307px;width:16px;height:20px;"></div>
<div class="cell" style="left:568px;top:307px;width:63px;height:20px;"></div>
<div class="cell" style="left:631px;top:307px;width:192px;height:20px;"></div>
<div class="cell" style="left:823px;top:307px;width:193px;height:20px;"></div>
<svg class="a" style="left:592px;top:310px" width="16" height="16" viewBox="0 0 16 16"><path d="M0 5.400 6.700 0 13.900 4.200V9L7 13.800 0 10.200z" fill="#0a1220"/><path d="M1.300 5.600 6.800 1.300 12.500 4.500 8 7.700z" fill="#5580c4"/><path d="M1.100 6.700 7.300 9.300 6.600 12.400 1.100 9.600z" fill="#58a6c8"/><path d="M8.700 9.100 12.800 6V8.400L8 12.100z" fill="#1d4282"/><path d="M2.800 4.300 9.500 7M4.800 2.700 11.300 5.700" stroke="#d4e4f8" stroke-width="1.100" fill="none"/><path d="M3.200 6.200 5.800 4M5.600 7.200 8.600 4.800M8 8 11 5.700" stroke="#3a5c9c" stroke-width=".8" fill="none"/><path d="M.8 6.600 7.400 9.300" stroke="#8fd0e4" stroke-width=".8"/></svg>
<div class="a" style="left:631px;top:307px;width:191px;height:19px;background:#316ac5"></div>
<svg class="a" style="left:558px;top:313px" width="4" height="8" viewBox="0 0 4 8"><path d="M0 0 4 4 0 8z" fill="#4a5573"/></svg>
<div class="t" style="left:635.3px;top:311px;letter-spacing:-.72px;color:#fff;">YSPC0101</div>
<div class="ind" style="left:552px;top:327px;width:16px;height:20px;"></div>
<div class="cell" style="left:568px;top:327px;width:63px;height:20px;"></div>
<div class="cell" style="left:631px;top:327px;width:192px;height:20px;"></div>
<div class="cell" style="left:823px;top:327px;width:193px;height:20px;"></div>
<svg class="a" style="left:592px;top:330px" width="16" height="16" viewBox="0 0 16 16"><path d="M0 5.400 6.700 0 13.900 4.200V9L7 13.800 0 10.200z" fill="#0a1220"/><path d="M1.300 5.600 6.800 1.300 12.500 4.500 8 7.700z" fill="#5580c4"/><path d="M1.100 6.700 7.300 9.300 6.600 12.400 1.100 9.600z" fill="#58a6c8"/><path d="M8.700 9.100 12.800 6V8.400L8 12.100z" fill="#1d4282"/><path d="M2.800 4.300 9.500 7M4.800 2.700 11.300 5.700" stroke="#d4e4f8" stroke-width="1.100" fill="none"/><path d="M3.200 6.200 5.800 4M5.600 7.200 8.600 4.800M8 8 11 5.700" stroke="#3a5c9c" stroke-width=".8" fill="none"/><path d="M.8 6.600 7.400 9.300" stroke="#8fd0e4" stroke-width=".8"/></svg>
<div class="t" style="left:635.3px;top:331px;letter-spacing:-.72px;color:#000;">YSPC0100</div>
<div class="ind" style="left:552px;top:347px;width:16px;height:20px;"></div>
<div class="cell" style="left:568px;top:347px;width:63px;height:20px;"></div>
<div class="cell" style="left:631px;top:347px;width:192px;height:20px;"></div>
<div class="cell" style="left:823px;top:347px;width:193px;height:20px;"></div>
<svg class="a" style="left:592px;top:350px" width="16" height="16" viewBox="0 0 16 16"><path d="M0 5.400 6.700 0 13.900 4.200V9L7 13.800 0 10.200z" fill="#0a1220"/><path d="M1.300 5.600 6.800 1.300 12.500 4.500 8 7.700z" fill="#5580c4"/><path d="M1.100 6.700 7.300 9.300 6.600 12.400 1.100 9.600z" fill="#58a6c8"/><path d="M8.700 9.100 12.800 6V8.400L8 12.100z" fill="#1d4282"/><path d="M2.800 4.300 9.500 7M4.800 2.700 11.300 5.700" stroke="#d4e4f8" stroke-width="1.100" fill="none"/><path d="M3.200 6.200 5.800 4M5.600 7.200 8.600 4.800M8 8 11 5.700" stroke="#3a5c9c" stroke-width=".8" fill="none"/><path d="M.8 6.600 7.400 9.300" stroke="#8fd0e4" stroke-width=".8"/></svg>
<div class="t" style="left:635.3px;top:351px;letter-spacing:-.61px;color:#000;">YSP_0101</div>
<div class="ind" style="left:552px;top:367px;width:16px;height:20px;"></div>
<div class="cell" style="left:568px;top:367px;width:63px;height:20px;"></div>
<div class="cell" style="left:631px;top:367px;width:192px;height:20px;"></div>
<div class="cell" style="left:823px;top:367px;width:193px;height:20px;"></div>
<svg class="a" style="left:592px;top:370px" width="16" height="16" viewBox="0 0 16 16"><path d="M0 5.400 6.700 0 13.900 4.200V9L7 13.800 0 10.200z" fill="#0a1220"/><path d="M1.300 5.600 6.800 1.300 12.500 4.500 8 7.700z" fill="#5580c4"/><path d="M1.100 6.700 7.300 9.300 6.600 12.400 1.100 9.600z" fill="#58a6c8"/><path d="M8.700 9.100 12.800 6V8.400L8 12.100z" fill="#1d4282"/><path d="M2.800 4.300 9.500 7M4.800 2.700 11.300 5.700" stroke="#d4e4f8" stroke-width="1.100" fill="none"/><path d="M3.200 6.200 5.800 4M5.600 7.200 8.600 4.800M8 8 11 5.700" stroke="#3a5c9c" stroke-width=".8" fill="none"/><path d="M.8 6.600 7.400 9.300" stroke="#8fd0e4" stroke-width=".8"/></svg>
<div class="t" style="left:635.3px;top:371px;letter-spacing:-.61px;color:#000;">YSP_0100</div>
<div class="a" style="left:551px;top:637px;width:482px;height:28px;border:1px solid #9fb4d3;background:#eef3fb"></div>
<div class="cb" style="left:558px;top:644px"></div>
<svg class="a" style="left:561px;top:646px" width="9" height="10" viewBox="0 0 9 10"><path d="M.7 4.800 3.300 8.500 8 .800" fill="none" stroke="#4a5878" stroke-width="1.600"/></svg>
<div class="t" style="left:578.5px;top:646px;letter-spacing:-.34px;">[Technical Name] Like 'YSP%'</div>
<svg class="a" style="left:720px;top:651px" width="5" height="3" viewBox="0 0 5 3"><path d="M0 0h5L2.5 3z" fill="#55607a"/></svg>
<svg class="a" style="left:988px;top:643px" width="16" height="16" viewBox="0 0 16 16"><path d="M11.500 1.300c1-.6 3.300 1.500 3 2.700L6.500 13 1.600 14.400 2.800 9.500z" fill="#9299b2" stroke="#4a5373" stroke-width="1.200" stroke-linejoin="round"/><path d="M2.800 9.500 6.500 13" stroke="#4a5373"/><path d="M2.300 11.200 1.600 14.400 4.800 13.600z" fill="#eef1f7" stroke="#4a5373" stroke-width=".9"/><path d="M4.500 10.500 12.300 2.800M5.800 11.800 13.500 4" stroke="#d9dde8" stroke-width=".8"/></svg>
<svg class="a" style="left:1010px;top:643px" width="16" height="16" viewBox="0 0 16 16"><circle cx="8" cy="8" r="7.800" fill="#4a5475"/><path d="M4.700 4.700 11.300 11.300M11.300 4.700 4.700 11.300" stroke="#fff" stroke-width="3"/></svg>
<div class="a" style="left:552px;top:674px;width:479px;height:67px;border:1px solid #9fb4d3;border-radius:4px"></div>
<div class="t" style="left:45.5px;top:689px;letter-spacing:-.38px;color:#000">Technical Name</div>
<svg class="a" style="left:124px;top:688px" width="16" height="16" viewBox="0 0 16 16"><rect width="14" height="14" fill="#000"/><rect x="1" y="2" width="12" height="11" fill="#fff"/><rect x="1" y="2" width="12" height="2" fill="#e2edfa"/><path d="M1 4.500h5M1 7.500h5M1 10.500h5" stroke="#8fb0e4"/><path d="M6.500 2v11" stroke="#6f94d8"/><rect x="7" y="5" width="6" height="8" fill="#ffff80"/><path d="M7 8.500h6M7 11.500h6" stroke="#ff1010" stroke-width="1.200"/><path d="M12.500 5v8" stroke="#b8b000" opacity=".7"/></svg>
<div class="t" style="left:147.4px;top:689px;letter-spacing:-.45px;color:#000">TMM_M001_Q002</div>
<div class="t" style="left:302.3px;top:689px;letter-spacing:-.52px;color:#000">UID</div>
<div class="t" style="left:326px;top:689px;letter-spacing:-.63px;color:#000">9IROG4JRJS0GZQTJF2U6NG04W</div>
<div class="gold" style="left:38px;top:706px;width:175px;height:26px;"></div>
<div class="t" style="left:45.5px;top:713px;letter-spacing:-.03px;color:#000">InfoProvider</div>
<svg class="a" style="left:124px;top:711px" width="16" height="16" viewBox="0 0 16 16"><circle cx="4.200" cy="4.600" r="3.700" fill="#7a90b8" stroke="#0c1424" stroke-width="1"/><path d="M2 2.500 6 7M3.500 1.500 7.300 5.800M1 4.500 4 8" stroke="#e6edf8" stroke-width=".8"/><path d="M10 .3 13.800 6.100H6.400z" fill="#08e408" stroke="#0a4a0a" stroke-width=".5"/><path d="M3.500 8.800v2.600c0 1.300 2.200 2.200 4.900 2.200s4.900-.9 4.900-2.200V8.800" fill="#1e9af8" stroke="#081430" stroke-width="1"/><ellipse cx="8.400" cy="8.700" rx="4.900" ry="1.900" fill="#e2f3ff" stroke="#081430" stroke-width="1"/><path d="M5 11.300c1 .9 3 1.200 5 .6" stroke="#8fe0ff" stroke-width="1.100" fill="none"/></svg>
<div class="t" style="left:147.4px;top:713px;letter-spacing:-.54px;color:#000">TMM_M001</div>
<div class="gold" style="left:555px;top:691px;width:155px;height:31px;"></div>
<div class="t" style="left:562.5px;top:701px;letter-spacing:-.03px;color:#000">InfoProvider</div>
<svg class="a" style="left:626px;top:699px" width="16" height="16" viewBox="0 0 16 16"><path d="M0 5.400 6.700 0 13.900 4.200V9L7 13.800 0 10.200z" fill="#0a1220"/><path d="M1.300 5.600 6.800 1.300 12.500 4.500 8 7.700z" fill="#5580c4"/><path d="M1.100 6.700 7.300 9.300 6.600 12.400 1.100 9.600z" fill="#58a6c8"/><path d="M8.700 9.100 12.800 6V8.400L8 12.100z" fill="#1d4282"/><path d="M2.800 4.300 9.500 7M4.800 2.700 11.300 5.700" stroke="#d4e4f8" stroke-width="1.100" fill="none"/><path d="M3.200 6.200 5.800 4M5.600 7.200 8.600 4.800M8 8 11 5.700" stroke="#3a5c9c" stroke-width=".8" fill="none"/><path d="M.8 6.600 7.400 9.300" stroke="#8fd0e4" stroke-width=".8"/></svg>
<div class="t" style="left:650.5px;top:701px;letter-spacing:-.72px;color:#000">YSPC0101</div>
<div class="a" style="left:822px;top:696px;width:175px;height:26px;border:1px solid #9fb4d3;border-radius:3px;background:linear-gradient(#e6eefa,#dde8f6 48%,#d3e0f1 52%,#cfdcef)"></div>
<div class="t c" style="left:829.1px;width:160px;top:704px;letter-spacing:.24px;color:#000">Next</div>
<div class="a" style="left:8px;top:768px;width:1050px;height:31px;background:#cfdcee;border:1px solid #6f7787;border-bottom:1px solid #5a5c62;box-shadow:0 1px 0 #8a97ae"></div>
<div class="t" style="left:12px;top:776px;letter-spacing:-.07px;">Active Project</div>
<div class="combo" style="left:85px;top:772px;width:100px;height:20px;"></div>
<div class="t" style="left:88.5px;top:776px;letter-spacing:-.58px;color:#000">P1</div>
<div class="cbtn" style="left:168px;top:773px;width:16px;height:18px;border:none;border-left:1px solid #9fb4d3"></div>
<svg class="a" style="left:173px;top:780px" width="7" height="4" viewBox="0 0 7 4"><path d="M0 0h7L3.5 4z" fill="#44506e"/></svg>
<div class="t" style="left:873.7px;top:776px;letter-spacing:-.61px;">SQLite</div>
<div class="t" style="left:931.9px;top:776px;letter-spacing:-.19px;">Admin (Full administrator)</div>
<svg class="a" style="left:854px;top:775px" width="17" height="16" viewBox="0 0 17 16"><path d="M1.500 2.500v10c0 1.200 2.500 2 5.500 2s5.500-.8 5.500-2v-10" fill="#dcdfe3" stroke="#a4aab3"/><ellipse cx="7" cy="2.500" rx="5.500" ry="1.900" fill="#f0f2f4" stroke="#a4aab3"/><path d="M1.500 6c0 1.200 2.500 2 5.500 2s5.500-.8 5.500-2M1.500 9.500c0 1.200 2.500 2 5.500 2" fill="none" stroke="#b4b9c1"/><rect x="7.500" y="6.500" width="8" height="8" fill="#2b9be6" stroke="#1665a8"/><rect x="9" y="7" width="5" height="3" fill="#fff"/><rect x="9.500" y="11.500" width="4" height="3" fill="#e9f4fd"/></svg>
<svg class="a" style="left:913px;top:774px" width="16" height="16" viewBox="0 0 16 16"><path d="M1 15c0-3 2-4.500 4.500-5h5c2.500.5 4.500 2 4.500 5z" fill="#e9e9f6" stroke="#4a4a8a"/><circle cx="8" cy="5.500" r="3.300" fill="#f3c79a" stroke="#a0643a" stroke-width=".8"/><path d="M4.700 5c0-2.500 1.500-3.500 3.300-3.500S11.300 2.500 11.300 5c-1-.3-1.500-1.500-1.800-2-.8 1-3 1.700-4.800 2z" fill="#8a5a22"/><path d="M5.500 10 8 12.500 10.500 10" fill="#fff" stroke="#4a4a8a" stroke-width=".8"/></svg>
</body></html>
